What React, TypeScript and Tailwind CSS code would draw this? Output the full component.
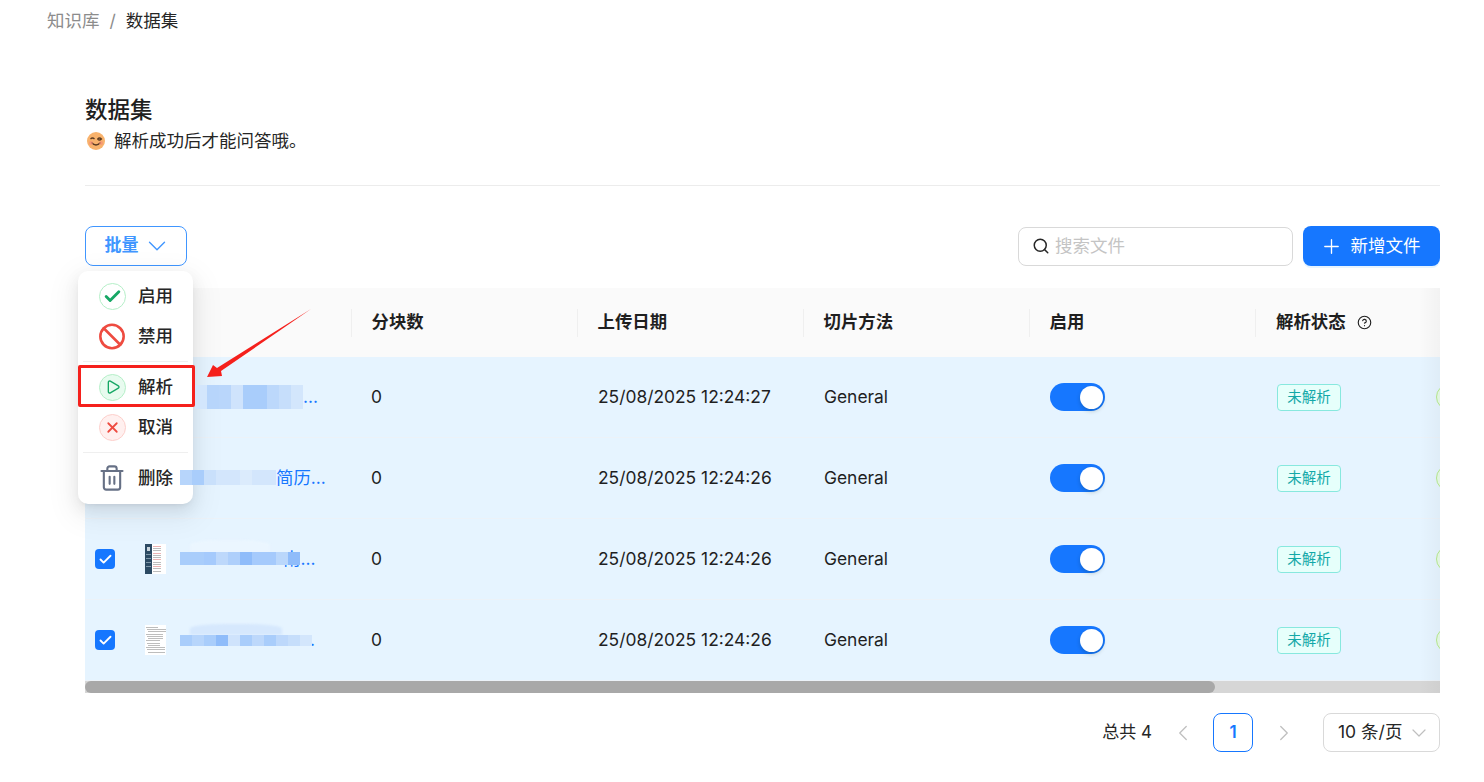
import React from 'react';
import {Ban, Check, ChevronDown, ChevronLeft, ChevronRight, CircleHelp, Play, Plus, Search, Trash2, X} from "lucide-react";

const font = "font-['Inter','Noto_Sans_CJK_SC',sans-serif]";

const rows = [
    {date: '25/08/2025 12:24:27', tail: '...', overlap: 0, lead: 15, h: 24, drop: 0, haze: 0, hazeColor: '#e3f1fe', thumb: 0, cells: ['#d3e6fc', '#b7d5fb', '#b9d6fb', '#cfe3fc', '#a9cdfb', '#a9cdfb', '#bcd8fb', '#c6defb', '#d3e6fc']},
    {date: '25/08/2025 12:24:26', tail: '简历...', overlap: 0, lead: 0, h: 15, drop: 0, haze: 0, hazeColor: '#e3f1fe', thumb: 1, cells: ['#b7d5fb', '#a9cdfb', '#c9e0fb', '#d3e6fc', '#d3e6fc', '#dbebfc', '#d3e6fc', '#d3e6fc']},
    {date: '25/08/2025 12:24:26', tail: '南...', overlap: 17, lead: 0, h: 13, drop: 0, haze: 12, hazeColor: '#ebf6ff', thumb: 2, cells: ['#a9cdfb', '#a9cdfb', '#a5cafc', '#bdd8fb', '#aecffb', '#8fbcfa', '#a5cafc', '#a5cafc', '#bad7fb', '#8fbcfa']},
    {date: '25/08/2025 12:24:26', tail: '.', overlap: 2, lead: 0, h: 11, drop: 1, haze: 11, hazeColor: '#d6e8fd', thumb: 3, cells: ['#a9cdfb', '#b7d5fb', '#a9cdfb', '#8fbcfa', '#cfe3fc', '#a9cdfb', '#bdd8fb', '#a9cdfb', '#bdd8fb', '#c6defb', '#d3e6fc']},
];

const heads = ['分块数', '上传日期', '切片方法', '启用'];

function Thumb({dark}: { dark: boolean }) {
    const lines = [2, 4, 6, 9, 11, 13, 15, 18, 20, 22, 24, 27];
    return (
        <svg width="21" height="30" viewBox="0 0 21 30" className="shrink-0">
            <rect width="21" height="30" fill="#fff"/>
            {dark && <rect width="7" height="30" fill="#2c4a63"/>}
            {dark && <rect x="2" y="3" width="3" height="4" fill="#c9d4dc"/>}
            {dark && [10, 14, 18, 22].map(y => <rect key={y} x="1" y={y} width="5" height="1" fill="#7f97a8"/>)}
            {lines.map((y, i) => (
                <rect key={y} x={dark ? 8 : 1 + (i % 3)} y={y} width={dark ? 8 + (i * 5) % 5 : 12 + (i * 7) % 8} height="1"
                      fill={dark && i % 3 === 0 ? '#eeb4b4' : '#bdbdbd'}/>
            ))}
        </svg>
    );
}

function Mosaic({row}: { row: typeof rows[number] }) {
    return (
        <div className="relative z-10 flex shrink-0" style={{height: row.h, marginTop: row.drop * 2}}>
            {row.haze > 0 && (
                <div className="absolute left-[10px] right-[30px] rounded-t-[40%] blur-[1px]"
                     style={{top: -row.haze, height: row.haze, backgroundColor: row.hazeColor}}/>
            )}
            {row.cells.map((c, i) => (
                <div key={i} className="relative h-full w-[12px]" style={{backgroundColor: c}}/>
            ))}
        </div>
    );
}

function Row({row}: { row: typeof rows[number] }) {
    return (
        <div className="flex h-[81px] items-center border-b border-[#ecf2f8] bg-[#e6f4ff] text-[17.4px] text-[#1f1f1f]">
            <div className="flex w-[40px] shrink-0 justify-center">
                <div className="flex h-[20px] w-[20px] items-center justify-center rounded-[4px] bg-[#1677ff]">
                    <Check size={15} strokeWidth={3} className="text-white"/>
                </div>
            </div>
            <div className="flex w-[226px] shrink-0 items-center pl-[20px]">
                <Thumb dark={row.thumb === 2}/>
                <div className="ml-[14px] flex items-center text-[#1677ff]" style={{paddingLeft: row.lead}}>
                    <Mosaic row={row}/>
                    <span className="whitespace-nowrap" style={{marginLeft: -row.overlap}}>{row.tail}</span>
                </div>
            </div>
            <div className="w-[226px] shrink-0 pl-[20px]">0</div>
            <div className="w-[226px] shrink-0 pl-[21px] whitespace-nowrap">{row.date}</div>
            <div className="w-[227px] shrink-0 pl-[21px]">General</div>
            <div className="w-[226px] shrink-0 pl-[20px]">
                <div className="relative flex h-[28px] w-[55px] items-center justify-end rounded-full bg-[#1677ff] pr-[2px]">
                    <div className="h-[23px] w-[23px] rounded-full bg-white shadow-[0_2px_4px_rgba(0,35,11,0.2)]"/>
                </div>
            </div>
            <div className="w-[160px] shrink-0 pl-[21px]">
                <span className="inline-flex h-[27px] w-[64px] items-center justify-center rounded-[4px] border border-[#87e8de] bg-[#e6fffb] text-[14.5px] text-[#13a8a8]">未解析</span>
            </div>
            <div className="shrink-0 pl-[20px]">
                <div className="h-[26px] w-[26px] rounded-full border border-[#b7eb8f] bg-[#e8fbe9]"/>
            </div>
        </div>
    );
}

function MenuItem({icon, label}: { icon: React.ReactNode, label: string }) {
    return (
        <div className="flex h-[40px] items-center pl-[20px]">
            <div className="flex w-[28px] justify-center">{icon}</div>
            <span className="ml-[12px] text-[17.5px] font-medium text-[#262626]">{label}</span>
        </div>
    );
}

function BatchMenu() {
    return (
        <div className="absolute left-[78px] top-[271px] w-[115px] rounded-[10px] bg-white pt-[5px] pb-[6px] shadow-[0_6px_16px_0_rgba(0,0,0,0.08),0_3px_6px_-4px_rgba(0,0,0,0.12),0_9px_28px_8px_rgba(0,0,0,0.05)]">
            <MenuItem label="启用" icon={
                <div className="flex h-[27px] w-[27px] items-center justify-center rounded-full border border-[#b5efc8] bg-white">
                    <Check size={19} strokeWidth={3.6} className="text-[#16a765]"/>
                </div>
            }/>
            <MenuItem label="禁用" icon={<Ban size={29} strokeWidth={2.2} className="text-[#ee4b40]"/>}/>
            <div className="mx-[5px] my-[5px] h-px bg-[#efefef]"/>
            <MenuItem label="解析" icon={
                <div className="flex h-[27px] w-[27px] items-center justify-center rounded-full border border-[#b5efc8] bg-[#e8fbef]">
                    <Play size={16} strokeWidth={2} className="ml-[1px] text-[#16a765]"/>
                </div>
            }/>
            <MenuItem label="取消" icon={
                <div className="flex h-[27px] w-[27px] items-center justify-center rounded-full border border-[#fdcfcb] bg-[#fff0ef]">
                    <X size={17} strokeWidth={2.5} className="text-[#ee4b40]"/>
                </div>
            }/>
            <div className="mx-[5px] my-[5px] h-px bg-[#efefef]"/>
            <MenuItem label="删除" icon={<Trash2 size={28} strokeWidth={1.8} className="text-[#667085]"/>}/>
        </div>
    );
}

function Annotation() {
    return (
        <>
            <div className="absolute left-[78px] top-[365px] h-[42px] w-[117px] rounded-[2px] border-[3px] border-[#f5201c]"/>
            <svg className="absolute left-0 top-0" width="340" height="400" viewBox="0 0 340 400">
                <polygon points="311,309 221,371 222,376 207,377 213,365 217,368" fill="#f5201c"/>
            </svg>
        </>
    );
}

function App() {
    return (
        <div className={`relative h-[782px] w-[1484px] overflow-hidden bg-white ${font}`}>
            <nav className="flex h-[42px] items-center pl-[47px] text-[17.5px]">
                <span className="text-[#8c8c8c]">知识库</span>
                <span className="mx-[10px] text-[#8c8c8c]">/</span>
                <span className="text-[#262626]">数据集</span>
            </nav>
            <main className="ml-[85px] w-[1355px]">
                <h1 className="mt-[52px] text-[22.5px] leading-[32px] font-medium text-[#1f1f1f]">数据集</h1>
                <div className="mt-[2px] flex items-center text-[17.5px] leading-[26px] text-[#262626]">
                    <svg width="18" height="18" viewBox="0 0 18 18" className="ml-[2px] mr-[9px]">
                        <circle cx="9" cy="9" r="9" fill="#f8b26c"/>
                        <path d="M3.5 7 Q5.5 5 7.5 7" stroke="#5a3a22" strokeWidth="1.2" fill="none"/>
                        <path d="M10.5 7 Q12.5 5 14.5 7 Q12.5 9 10.5 7" stroke="#5a3a22" strokeWidth="1.2" fill="none"/>
                        <path d="M4.5 10.5 Q9 15.5 13.5 10.5" stroke="#5a3a22" strokeWidth="1.3" fill="none"/>
                        <circle cx="4" cy="11" r="2" fill="#f58a7a" opacity="0.6"/>
                        <circle cx="14" cy="11" r="2" fill="#f58a7a" opacity="0.6"/>
                    </svg>
                    解析成功后才能问答哦。
                </div>
                <div className="mt-[31px] h-px bg-[#ececec]"/>

                <div className="mt-[40px] flex h-[40px] items-center justify-between">
                    <button className="flex h-[40px] w-[102px] items-center justify-center gap-[3px] rounded-[8px] border border-[#4096ff] bg-white pl-[4px] text-[17px] font-semibold text-[#4096ff]">
                        批量 <ChevronDown size={30} strokeWidth={1.1}/>
                    </button>
                    <div className="flex items-center gap-[10px]">
                        <div className="flex h-[39px] w-[275px] items-center rounded-[8px] border border-[#d9d9d9] bg-white pl-[13px] text-[17.5px] text-[#c4c4c4]">
                            <Search size={18} strokeWidth={2} className="mr-[5px] text-[#262626]"/>
                            搜索文件
                        </div>
                        <button className="flex h-[40px] w-[137px] items-center justify-center gap-[8px] rounded-[8px] bg-[#1677ff] pr-[3px] text-[17.5px] text-white shadow-[0_2px_0_rgba(5,145,255,0.1)]">
                            <Plus size={23} strokeWidth={1.4}/> 新增文件
                        </button>
                    </div>
                </div>

                <div className="relative mt-[22px] overflow-hidden">
                    <div className="flex h-[69px] items-center bg-[#fafafa] text-[17.4px] font-semibold text-[#1f1f1f]">
                        <div className="w-[266px] shrink-0"/>
                        {heads.map(h => (
                            <div key={h} className="flex h-[28px] w-[226px] shrink-0 items-center border-l border-[#efefef] pl-[19.5px]">{h}</div>
                        ))}
                        <div className="flex h-[28px] shrink-0 items-center gap-[11px] border-l border-[#efefef] pl-[20px]">
                            解析状态 <CircleHelp size={15} strokeWidth={1.8}/>
                        </div>
                    </div>
                    {rows.map((row, i) => <Row key={i} row={row}/>)}
                    <div className="h-[12px] bg-[#d6d6d6]">
                        <div className="h-full w-[1130px] rounded-full bg-[#a8a8a8]"/>
                    </div>
                    <div className="absolute right-0 top-0 bottom-0 w-[20px] bg-gradient-to-l from-[rgba(0,0,0,0.03)] to-transparent"/>
                </div>

                <div className="mt-[20px] flex h-[39px] items-center justify-end text-[17px] text-[#262626]">
                    <span>总共 4</span>
                    <ChevronLeft size={26} strokeWidth={1.2} className="ml-[18px] text-[#bfbfbf]"/>
                    <div className="ml-[17px] flex h-[39px] w-[40px] items-center justify-center rounded-[8px] border border-[#1677ff] font-semibold text-[#1677ff]">1</div>
                    <ChevronRight size={26} strokeWidth={1.2} className="ml-[18px] text-[#bfbfbf]"/>
                    <div className="ml-[26px] flex h-[39px] w-[117px] items-center justify-between rounded-[8px] border border-[#d9d9d9] pl-[14px] pr-[8px] text-[17.5px]">
                        10 条/页 <ChevronDown size={24} strokeWidth={1.2} className="text-[#bfbfbf]"/>
                    </div>
                </div>
            </main>
            <BatchMenu/>
            <Annotation/>
        </div>
    );
}

export default App;
